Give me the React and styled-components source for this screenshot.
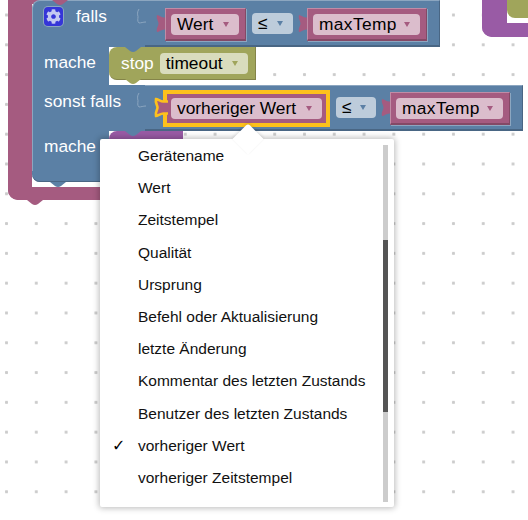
import React from "react";
import styled, { createGlobalStyle } from "styled-components";
import { FaCog } from "react-icons/fa";

const GlobalStyle = createGlobalStyle`
  html, body {
    margin: 0;
    padding: 0;
    background: #fff;
  }
`;

const tones = {
  blue: { base: "#5b80a5", light: "#bdccdb", hi: "#8ca6c0", low: "#496684" },
  red: { base: "#a55b80", light: "#dbbdcc", hi: "#c08ca6", low: "#844966" },
  olive: { base: "#a0a55b", light: "#d9dcbd", hi: "#c0c08c", low: "#848449" },
  purple: { base: "#995ba5", light: "#d6bddb", hi: "#b88cc0", low: "#7a4984" },
};

const menuItems = [
  "Gerätename",
  "Wert",
  "Zeitstempel",
  "Qualität",
  "Ursprung",
  "Befehl oder Aktualisierung",
  "letzte Änderung",
  "Kommentar des letzten Zustands",
  "Benutzer des letzten Zustands",
  "vorheriger Wert",
  "vorheriger Zeitstempel",
];

function Notch({ tone, left, top }) {
  return (
    <NotchShape viewBox="0 0 16 5" $left={left} $top={top}>
      <path d="M0 0 L5 4 Q8 6 11 4 L16 0 Z" fill={tones[tone].base} />
    </NotchShape>
  );
}

function Socket() {
  return (
    <SocketShape viewBox="0 0 10 18">
      <path
        d="M3 1 C1 4 1.5 6.5 2 8.5 C2 11 1 13 3 15 C5 15 7 14 10 14"
        fill="none"
        stroke="#8ca6c0"
      />
    </SocketShape>
  );
}

function Field({ tone, width, spread, children }) {
  return (
    <FieldBox $tone={tone} $width={width} $spread={spread}>
      <span>{children}</span>
      <Caret $tone={tone} />
    </FieldBox>
  );
}

function ValueBlock({ children, selected, width, spread }) {
  return (
    <ValueBox $selected={selected}>
      {selected ? (
        <SelectedTab viewBox="-2 -2 16 21">
          <path
            d="M13 2.5 H9 C6 3 3 0 1 0 C0 4 2.5 6 2.5 8.5 C2.5 11 0 13 1 17 C3 17 6 14 9 14.5 H13"
            fill="#a55b80"
            stroke="#fdc11c"
            strokeWidth="2.6"
          />
        </SelectedTab>
      ) : (
        <TabShape viewBox="0 0 9 17">
          <path
            d="M9 2.5 C6 3 3 0 1 0 C0 4 2.5 6 2.5 8.5 C2.5 11 0 13 1 17 C3 17 6 14 9 14.5 Z"
            fill="#a55b80"
          />
        </TabShape>
      )}
      <Field tone="red" width={width} spread={spread}>
        {children}
      </Field>
    </ValueBox>
  );
}

function App() {
  return (
    <Canvas>
      <GlobalStyle />

      <OuterBlock>
        <Notch tone="red" left={-5} top="calc(100% + 13px)" />
      </OuterBlock>

      <IfBlock>
        <Notch tone="red" left={20} top={0} />

        <Row $first>
          <LabelCell $wide $first>
            <GearBadge>
              <FaCog />
            </GearBadge>
            falls
            <Socket />
          </LabelCell>
          <InputArea $first>
            <ValueBlock width={68}>Wert</ValueBlock>
            <Field tone="blue" width={41}>
              ≤
            </Field>
            <ValueBlock width={107} spread>
              maxTemp
            </ValueBlock>
          </InputArea>
        </Row>

        <StatementRow>
          <LabelCell>mache</LabelCell>
          <StopBlock>
            <Notch tone="blue" left={16} top={0} />
            stop
            <Field tone="olive" width={88}>
              timeout
            </Field>
            <Notch tone="olive" left={16} top="100%" />
          </StopBlock>
        </StatementRow>

        <Row>
          <LabelCell $wide $low>
            sonst falls
            <Socket />
          </LabelCell>
          <InputArea>
            <ValueBlock selected width={151}>
              vorheriger Wert
            </ValueBlock>
            <Field tone="blue" width={40}>
              ≤
            </Field>
            <ValueBlock width={107} spread>
              maxTemp
            </ValueBlock>
          </InputArea>
        </Row>

        <StatementRow $tall>
          <LabelCell>mache</LabelCell>
          <PurpleStub>
            <Notch tone="blue" left={16} top={0} />
          </PurpleStub>
        </StatementRow>

        <Footer>
          <Notch tone="blue" left={18} top="100%" />
        </Footer>
      </IfBlock>

      <CornerBlock>
        <CornerInner />
      </CornerBlock>

      <Menu>
        <MenuArrow />
        {menuItems.map((item) => (
          <MenuItem key={item}>
            <CheckMark>{item === "vorheriger Wert" ? "✓" : ""}</CheckMark>
            {item}
          </MenuItem>
        ))}
        <ScrollTrack>
          <ScrollThumb />
        </ScrollTrack>
      </Menu>
    </Canvas>
  );
}

const Canvas = styled.div`
  position: relative;
  width: 528px;
  height: 520px;
  overflow: hidden;
  background-color: #fff;
  background-image: radial-gradient(circle at 1.5px 1.5px, #ccc 1.3px, transparent 1.9px);
  background-size: 29.8px 29.8px;
  background-position: 5px 13.5px;
  font-family: "Liberation Sans", Arial, sans-serif;
`;

const NotchShape = styled.svg`
  position: absolute;
  left: ${(p) => p.$left}px;
  top: ${(p) => (typeof p.$top === "number" ? `${p.$top}px` : p.$top)};
  width: 16px;
  height: 5px;
  z-index: 2;
`;

const SocketShape = styled.svg`
  position: absolute;
  right: -1px;
  top: 7px;
  width: 10px;
  height: 18px;
`;

const TabShape = styled.svg`
  position: absolute;
  left: -10px;
  top: 6px;
  width: 9px;
  height: 17px;
  overflow: visible;
`;

const SelectedTab = styled.svg`
  position: absolute;
  left: -12.5px;
  top: 5px;
  width: 16px;
  height: 21px;
  overflow: visible;
`;

const OuterBlock = styled.div`
  position: absolute;
  left: 8px;
  top: -20px;
  width: 190px;
  height: 220px;
  box-sizing: border-box;
  border-style: solid;
  border-color: #a55b80;
  border-width: 24px 0 13px 24px;
  border-radius: 0 0 0 10px;
`;

const IfBlock = styled.div`
  position: absolute;
  left: 32px;
  top: 0;
  display: flex;
  flex-direction: column;
  align-items: flex-start;
  color: #fff;
  font-size: 17.33px;
`;

const Row = styled.div`
  display: flex;
  height: ${(p) => (p.$first ? "47px" : "46px")};
`;

const StatementRow = styled.div`
  display: flex;
  height: ${(p) => (p.$tall ? "40px" : "38px")};
`;

const LabelCell = styled.div`
  position: relative;
  display: flex;
  align-items: flex-start;
  box-sizing: border-box;
  width: ${(p) => (p.$wide ? "113px" : "77px")};
  padding: ${(p) => (p.$low ? "6px" : "5px")} 0 0 11px;
  line-height: 20px;
  background: #5b80a5;
  border-left: 1px solid #8ca6c0;
  border-top: ${(p) => (p.$first ? "1px solid #8ca6c0" : "0")};
  border-radius: ${(p) => (p.$first ? "8px 0 0 0" : "0")};
  white-space: nowrap;
`;

const GearBadge = styled.div`
  display: flex;
  align-items: center;
  justify-content: center;
  width: 19px;
  height: 19px;
  margin: 1px 13px 0 0;
  border-radius: 4px;
  background: #3535d8;
  box-shadow: 0 0 0 1px #8ca6c0;
  color: #c3c8f2;
  font-size: 15px;
`;

const InputArea = styled.div`
  display: flex;
  align-items: center;
  box-sizing: border-box;
  padding: ${(p) => (p.$first ? "1px" : "0")} 12px 0 20px;
  background: #5b80a5;
  border-top: 1px solid #8ca6c0;
  border-bottom: 2px solid #496684;
  border-left: 1px solid #8ca6c0;
  border-right: 1px solid #496684;
  margin-left: -1px;
`;

const ValueBox = styled.div`
  position: relative;
  display: flex;
  align-items: center;
  box-sizing: border-box;
  height: 33px;
  margin: 2px ${(p) => (p.$selected ? "8px" : "0")} 0 0;
  padding: 0 6px;
  background: #a55b80;
  ${(p) =>
    p.$selected
      ? "box-shadow: 0 0 0 2px #fdc11c, inset 0 0 0 2px #fdc11c;"
      : `border-top: 1px solid #c08ca6;
         border-left: 1px solid #c08ca6;
         border-bottom: 2px solid #844966;
         border-right: 1px solid #844966;
         box-shadow: 1px 1px 0 #8ca6c0;
         padding: 0 6px 0 5px;`}

  & + div {
    margin-left: ${(p) => (p.$selected ? "0" : "6px")};
  }
`;

const FieldBox = styled.div`
  position: relative;
  display: flex;
  align-items: center;
  justify-content: space-between;
  box-sizing: border-box;
  width: ${(p) => p.$width}px;
  height: 21px;
  padding: 0 10px 0 6px;
  border-radius: 4px;
  background: ${(p) => tones[p.$tone].light};
  color: #000;
  font-size: 17.33px;
  letter-spacing: ${(p) => (p.$spread ? "0.4px" : "0")};
  white-space: nowrap;

  & + div {
    margin-left: 14px;
  }
`;

const Caret = styled.i`
  width: 0;
  height: 0;
  border-left: 3.5px solid transparent;
  border-right: 3.5px solid transparent;
  border-top: 5px solid ${(p) => tones[p.$tone].base};
`;

const StopBlock = styled.div`
  position: relative;
  display: flex;
  align-items: center;
  gap: 6px;
  box-sizing: border-box;
  width: 147px;
  height: 33px;
  padding-left: 12px;
  border-radius: 8px 0 0 8px;
  background: #a0a55b;
  box-shadow: 0 5px 0 #fff;
  border-right: 1px solid #848449;
  border-bottom: 1px solid #848449;
`;

const PurpleStub = styled.div`
  position: relative;
  width: 74px;
  height: 40px;
  border-radius: 8px 0 0 8px;
  background: #995ba5;
`;

const Footer = styled.div`
  position: relative;
  width: 120px;
  height: 11px;
  border-radius: 0 0 0 8px;
  background: #5b80a5;
  box-shadow: 0 5px 0 #fff, inset 0 -1px 0 #496684;
`;

const CornerBlock = styled.div`
  position: absolute;
  left: 482px;
  top: -34px;
  width: 80px;
  height: 71px;
  box-sizing: border-box;
  border-style: solid;
  border-color: #995ba5;
  border-width: 0 0 14px 25px;
  border-radius: 0 0 0 10px;
`;

const CornerInner = styled.div`
  height: 52px;
  border-radius: 0 0 0 8px;
  background: #a0a55b;
  box-shadow: 0 5px 0 #fff;
`;

const Menu = styled.div`
  position: absolute;
  left: 100px;
  top: 139px;
  width: 294px;
  height: 368px;
  box-sizing: border-box;
  padding-top: 1px;
  border-radius: 2px;
  background: #fff;
  box-shadow: 0 0 6px 1px rgba(0, 0, 0, 0.28);
  color: #111;
  font-size: 15.5px;
`;

const MenuArrow = styled.div`
  position: absolute;
  left: 137px;
  top: -11px;
  width: 22px;
  height: 22px;
  border-radius: 3px 0 0 0;
  background: #fff;
  transform: rotate(45deg);
  box-shadow: -1px -1px 3px rgba(0, 0, 0, 0.12);
  z-index: 0;
`;

const MenuItem = styled.div`
  position: relative;
  display: flex;
  align-items: center;
  height: 32.2px;
  white-space: nowrap;
`;

const CheckMark = styled.span`
  width: 38px;
  padding-left: 12px;
  box-sizing: border-box;
  font-family: "DejaVu Sans", sans-serif;
  font-size: 16px;
  color: #000;
`;

const ScrollTrack = styled.div`
  position: absolute;
  left: 283px;
  top: 6px;
  width: 5px;
  height: 357px;
  background: #ccc;
`;

const ScrollThumb = styled.div`
  margin-top: 95px;
  height: 172px;
  background: #555;
`;

export default App;
